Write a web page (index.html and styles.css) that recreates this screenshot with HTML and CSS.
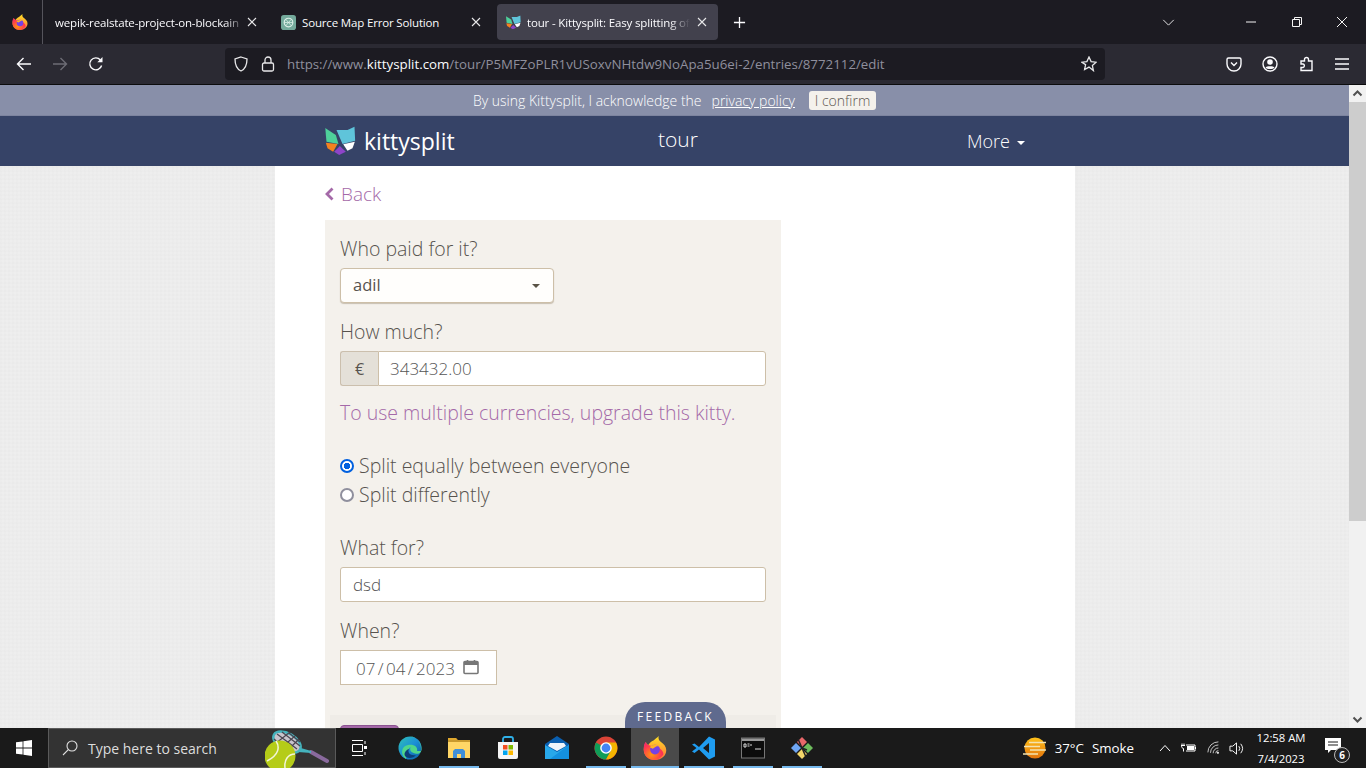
FILE: index.html
```html
<!DOCTYPE html>
<html lang="en">
<head>
<meta charset="utf-8">
<title>tour - Kittysplit</title>
<link rel="stylesheet" href="styles.css">
</head>
<body>
<header class="tabbar">
  <div class="ff-slot">
    <svg class="i16" viewBox="0 0 32 32"><use href="#firefox"/></svg>
  </div>
  <div class="tab tab-1"><span class="tab-title fade">wepik-realstate-project-on-blockain</span><svg class="tab-x" viewBox="0 0 10 10"><path d="M1 1l8 8M9 1l-8 8"/></svg></div>
  <div class="tab tab-2">
    <svg class="tab-ico" viewBox="0 0 16 16"><rect width="16" height="16" rx="3" fill="#74aa9c"/><circle cx="8" cy="8" r="4.600" fill="none" stroke="#dff0ea" stroke-width="1.200"/><path d="M5 4.500l6 7M11 4.500l-6 7M3.500 8h9" stroke="#dff0ea" stroke-width=".8"/></svg>
    <span class="tab-title">Source Map Error Solution</span><svg class="tab-x" viewBox="0 0 10 10"><path d="M1 1l8 8M9 1l-8 8"/></svg></div>
  <div class="tab tab-3">
    <svg class="tab-ico" viewBox="0 0 92 90"><use href="#kitty"/></svg>
    <span class="tab-title fade">tour - Kittysplit: Easy splitting of</span><svg class="tab-x" viewBox="0 0 10 10"><path d="M1 1l8 8M9 1l-8 8"/></svg></div>
  <svg class="plus" viewBox="0 0 14 14"><path d="M7 1v12M1 7h12"/></svg>
  <div class="win-ctrls">
    <svg class="chev" viewBox="0 0 14 8"><path d="M1 1l6 6 6-6"/></svg>
    <svg class="wc wc-min" viewBox="0 0 10 10"><path d="M0 5h10"/></svg>
    <svg class="wc wc-max" viewBox="0 0 10 10"><path d="M.5 2.500h7v7h-7zM2.500 2.500v-2h7v7h-2"/></svg>
    <svg class="wc wc-close" viewBox="0 0 10 10"><path d="M0 0l10 10M10 0L0 10"/></svg>
  </div>
</header>
<nav class="toolbar">
  <svg class="tb-ico" viewBox="0 0 16 16"><path d="M15 8H1.500M7.500 2L1.500 8l6 6"/></svg>
  <svg class="tb-ico dim" viewBox="0 0 16 16"><path d="M1 8h13.500M8.500 2l6 6-6 6"/></svg>
  <svg class="tb-ico" viewBox="0 0 16 16"><path d="M13.600 9.500A6 6 0 1 1 12.400 4"/><path class="solid" d="M14.500 1v5.200H9.300z"/></svg>
  <div class="urlbar">
    <svg class="ub-shield" viewBox="0 0 16 16"><path d="M8 1l6 2c0 6-1.500 10-6 12C3.500 13 2 9 2 3z"/></svg>
    <svg class="ub-lock" viewBox="0 0 16 16"><rect x="2.500" y="7" width="11" height="8" rx="1.500"/><path d="M5 7V4a3 3 0 0 1 6 0v3"/></svg>
    <span class="url"><span class="url-dim">https://www.</span><span class="url-host">kittysplit.com</span><span class="url-dim">/tour/P5MFZoPLR1vUSoxvNHtdw9NoApa5u6ei-2/entries/8772112/edit</span></span>
    <svg class="ub-star" viewBox="0 0 16 16"><path d="M8 1l2.100 4.600 5 .6-3.700 3.400 1 5L8 11.100l-4.400 2.500 1-5L.9 6.200l5-.6z"/></svg>
  </div>
  <div class="tb-right">
    <svg class="tb-ico" viewBox="0 0 16 16"><path d="M2.500 2h11A1.500 1.500 0 0 1 15 3.500V8A7 7 0 0 1 1 8V3.500A1.500 1.500 0 0 1 2.500 2z"/><path d="M5 6.500l3 3 3-3"/></svg>
    <svg class="tb-ico" viewBox="0 0 16 16"><circle cx="8" cy="8" r="7"/><circle class="solid" cx="8" cy="6" r="2.800"/><path class="solid" d="M3.500 11.500c1-1.700 8-1.700 9 0C11 13.500 5 13.500 3.500 11.500z"/></svg>
    <svg class="tb-ico" viewBox="0 0 16 16"><path d="M2 5h3.500V3.500a2 2 0 0 1 4 0V5H13v9.500H2v-3h2a1.800 1.800 0 0 0 0-3.500H2z" transform="translate(1 0)"/></svg>
    <svg class="tb-ico" viewBox="0 0 16 16"><path d="M1 3h14M1 8h14M1 13h14"/></svg>
  </div>
</nav>
<div class="viewport">
  <div class="page">
    <div class="consent"><span>By using Kittysplit, I acknowledge the</span><a class="consent-link">privacy policy</a><button class="confirm">I confirm</button></div>
    <div class="navbar">
      <div class="nav-inner">
        <a class="brand"><svg class="brand-ico" viewBox="0 0 92 90"><use href="#kitty"/></svg><span class="brand-name">kittysplit</span></a>
        <span class="nav-title">tour</span>
        <a class="nav-more">More<i class="caret"></i></a>
      </div>
    </div>
    <main class="sheet">
      <a class="back"><svg class="back-ico" viewBox="0 0 9 14"><path d="M7.500 1.500L2 7l5.500 5.500"/></svg>Back</a>
      <form class="panel">
        <label class="lbl lbl-first">Who paid for it?</label>
        <div class="select">adil<i class="caret caret-dark"></i></div>
        <label class="lbl">How much?</label>
        <div class="group"><span class="addon">€</span><input class="field field-joined" value="343432.00"></div>
        <p class="upgrade">To use multiple currencies, upgrade this kitty.</p>
        <label class="opt"><input class="radio" type="radio" name="split" checked>Split equally between everyone</label>
        <label class="opt"><input class="radio" type="radio" name="split">Split differently</label>
        <label class="lbl lbl-what">What for?</label>
        <input class="field" value="dsd">
        <label class="lbl">When?</label>
        <div class="date">07 / 04 / 2023<svg class="cal" viewBox="0 0 16 16"><path class="cal-band" d="M1 3.500a1 1 0 0 1 1-1h12a1 1 0 0 1 1 1V6H1z"/><path d="M1 5h14v8.500a1 1 0 0 1-1 1H2a1 1 0 0 1-1-1V3.500a1 1 0 0 1 1-1h12a1 1 0 0 1 1 1V5M4.500 1v2.500M11.500 1v2.500"/></svg></div>
        <div class="actions"><button class="save" type="button" aria-label="Save"></button></div>
      </form>
    </main>
  </div>
  <div class="scrollbar">
    <svg class="sb-arrow" viewBox="0 0 17 17"><path d="M4.500 10.500l4-4 4 4"/></svg>
    <div class="sb-track"><div class="sb-thumb"></div></div>
    <svg class="sb-arrow" viewBox="0 0 17 17"><path d="M4.500 6.500l4 4 4-4"/></svg>
  </div>
  <div class="feedback">FEEDBACK</div>
</div>
<footer class="taskbar">
  <div class="start"><svg class="win" viewBox="0 0 16 16"><path d="M0 2.300l6.600-.9v6.200H0zM7.400 1.300L16 0v7.600H7.400zM0 8.400h6.600v6.200L0 13.700zM7.400 8.400H16V16l-8.600-1.300z"/></svg></div>
  <div class="search">
    <svg class="search-ico" viewBox="0 0 16 16"><circle cx="10" cy="6" r="5"/><path d="M6.300 9.700L1 15"/></svg>
    <span class="search-text">Type here to search</span>
    <svg class="racket" viewBox="0 0 64 39">
      <path d="M46 23l16 9" stroke="#8a6a9e" stroke-width="4" stroke-linecap="round"/>
      <path d="M32 19l14 4M20 21l26 2" stroke="#45b3bd" stroke-width="2"/>
      <ellipse cx="22" cy="13" rx="15" ry="8.500" transform="rotate(30 22 13)" fill="#c9c4cc" stroke="#45b3bd" stroke-width="2.500"/>
      <path d="M12 5l20 15M17 3l18 14M24 4l11 9M9 10l15 13M10 15l15-12M16 19L30 7M23 21l11-11" stroke="#4a4550" stroke-width="1.200"/>
      <circle cx="15" cy="27" r="15.500" fill="#b5cc18"/>
      <path d="M11 12c4 6 3 14-9 20M30 25c-7 0-11 6-10 14" fill="none" stroke="#f2f5d8" stroke-width="1.500"/>
    </svg>
  </div>
  <div class="taskview"><svg class="tv" viewBox="0 0 16 16"><path d="M0 .5h11M0 15.500h11M.5 4.500h10v7H.5zM13 1v3M13 12v3"/><rect class="tv-dot" x="12" y="6" width="3" height="3"/></svg></div>
  <div class="apps">
    <div class="app"><svg class="app-ico" viewBox="0 0 24 24"><defs><linearGradient id="edge" x1="0" y1="0" x2="1" y2="1"><stop offset="0" stop-color="#2fc2b5"/><stop offset=".5" stop-color="#1b8fd6"/><stop offset="1" stop-color="#0a5c9e"/></linearGradient></defs><circle cx="12" cy="12" r="11.500" fill="url(#edge)"/><path d="M8 23C2 19 3 10 10 9c6-1 10 2 9 6h4C24 7 18 0 12 .5 20 1 24 8 23.500 14c-1 5-6 4-8 3-3-1-4-3-3-6-3 2-4 8-4.500 12z" fill="#4fd68a"/><path d="M11 13c-2 4 2 7 7 6-2 3-7 4-10 2s-1-7 3-8z" fill="#0c3e78"/></svg></div>
    <div class="app app-on"><svg class="app-ico" viewBox="0 0 24 24"><path d="M1 2h8l2 2h12v18H1z" fill="#c99a2e"/><path d="M1 6h22v16H1z" fill="#ffd666"/><path d="M1 2h8l1 2H1z" fill="#e0a82e"/><path d="M6 22v-7l2-2h8l2 2v7h-4v-4h-4v4z" fill="#3f8fd8"/></svg></div>
    <div class="app"><svg class="app-ico" viewBox="0 0 24 24"><path d="M7 6V3a2 2 0 0 1 2-2h6a2 2 0 0 1 2 2v3" fill="none" stroke="#2fb0e8" stroke-width="1.800"/><path d="M2 6h20v15a2 2 0 0 1-2 2H4a2 2 0 0 1-2-2z" fill="#f5f5f5"/><rect x="7" y="9" width="4.500" height="4.500" fill="#f25022"/><rect x="12.500" y="9" width="4.500" height="4.500" fill="#7fba00"/><rect x="7" y="14.500" width="4.500" height="4.500" fill="#00a4ef"/><rect x="12.500" y="14.500" width="4.500" height="4.500" fill="#ffb900"/></svg></div>
    <div class="app"><svg class="app-ico" viewBox="0 0 24 24"><path d="M12 0l12 8v15H0V8z" fill="#0a5fb0"/><path d="M5 7h14l2 3-9 5-9-5z" fill="#eef4fa"/><path d="M0 9l12 7 12-7v14H0z" fill="#28a8ea"/><path d="M24 9v14H5z" fill="#1490df"/></svg></div>
    <div class="app app-on"><svg class="app-ico" viewBox="0 0 24 24"><circle cx="12" cy="12" r="11.500" fill="#db4437"/><path d="M12 12L2 6.500A11.500 11.500 0 0 0 12 23.500l5-9z" fill="#0f9d58"/><path d="M12 6.500h10A11.500 11.500 0 0 1 12 23.500l5-9z" fill="#f4b400"/><circle cx="12" cy="12" r="5.800" fill="#fff"/><circle cx="12" cy="12" r="4.400" fill="#4285f4"/></svg></div>
    <div class="app app-active"><svg class="app-ico" viewBox="0 0 32 32"><use href="#firefox"/></svg></div>
    <div class="app app-on"><svg class="app-ico" viewBox="0 0 24 24"><path d="M17 .5l6 3v17l-6 3-10-10-4.500 3.500L0 15.500 4.500 12 0 8.500 2.500 7.500 7 11zM17 7l-6 5 6 5z" fill="#1f9cf0"/></svg></div>
    <div class="app app-on"><svg class="app-ico" viewBox="0 0 24 24"><rect x=".5" y="2" width="23" height="20" fill="#0c0c0c" stroke="#777"/><rect x="1" y="2.500" width="22" height="2.500" fill="#999"/><path d="M3 8h2v3H3zM6.500 8h2M6.500 10h2M10 8v2M14 13h6" stroke="#ddd" fill="none"/></svg></div>
    <div class="app app-on"><svg class="app-ico" viewBox="0 0 24 24"><path d="M12 1l5 5-5 5-5-5z" fill="#e8676a"/><path d="M6 7l5 5-5 5-5-5z" fill="#6ea6f5"/><path d="M18 7l5 5-5 5-5-5z" fill="#6dbb5c"/><path d="M12 13l5 5-5 5-5-5z" fill="#f4d76b"/><path d="M8 3l8 18M12 12l5 2" stroke="#222" stroke-width="1.500" fill="none"/></svg></div>
  </div>
  <div class="tray">
    <svg class="sun" viewBox="0 0 24 24"><defs><linearGradient id="sun" x1="0" y1="0" x2="0" y2="1"><stop offset="0" stop-color="#ffc21a"/><stop offset="1" stop-color="#e2730c"/></linearGradient></defs><circle cx="12" cy="12" r="10.500" fill="url(#sun)"/><path d="M6 6.500h17M1 10.500h16M7 14h16M0 18h15" stroke="#f4e3b0" stroke-width="1.600"/></svg>
    <span class="temp">37°C</span><span class="weather">Smoke</span>
    <svg class="tray-ico tray-up" viewBox="0 0 12 8"><path d="M1 7l5-5.500L11 7"/></svg>
    <svg class="tray-ico tray-bat" viewBox="0 0 16 12"><path d="M5 3h9v6H5M14.500 5v2M0 3.500h4M1 1.500v2M3 1.500v2M.5 3.500c0 2 1 3 2 3v3"/><rect class="tray-fill" x="6" y="4" width="7" height="4"/></svg>
    <svg class="tray-ico tray-wifi" viewBox="0 0 16 16"><path d="M1 13A12 12 0 0 1 13 1M4 13.500A9 9 0 0 1 13 4.500M7 14a6 6 0 0 1 6-6M10 14a3 3 0 0 1 3-3"/><circle class="tray-fill" cx="12.500" cy="13.500" r="1.300"/></svg>
    <svg class="tray-ico tray-vol" viewBox="0 0 16 16"><path d="M1 5.500h3L8 2v12l-4-3.500H1zM10.500 5.500a4 4 0 0 1 0 5M12.500 3a8 8 0 0 1 0 10"/></svg>
    <div class="clock"><span>12:58 AM</span><span>7/4/2023</span></div>
    <div class="notif">
      <svg class="notif-ico" viewBox="0 0 16 16"><path class="tray-solid" d="M0 0h16v12H6l-3 3v-3H0z"/><path d="M3 4h10M3 7h10" stroke="#1a1a1a" fill="none"/></svg>
      <span class="badge">6</span>
    </div>
  </div>
</footer>
<svg class="defs" width="0" height="0">
  <defs>
    <radialGradient id="ffg" cx=".4" cy=".7" r=".9"><stop offset="0" stop-color="#ff980e"/><stop offset=".55" stop-color="#ff3750"/><stop offset="1" stop-color="#e31587"/></radialGradient>
    <linearGradient id="ffy" x1="0" y1="0" x2="0" y2="1"><stop offset="0" stop-color="#ffe226"/><stop offset="1" stop-color="#ff7139"/></linearGradient>
    <symbol id="firefox" viewBox="0 0 32 32">
      <path d="M21 0c-1 3 0 6 3 8 4 3 7 6 7 11 0 7-6 13-15 13C7 32 1 26 1 18c0-4 1-7 3-10 0 2 1 3 3 4 2-3 4-5 7-6 2-2 5-4 7-6z" fill="url(#ffy)"/>
      <path d="M1 18C1 12 2 9 4 8c0 2 1 3 3 4l3 1 10 2c5 3 8 7 7 10-3 4-7 7-12 7C7 32 1 26 1 18z" fill="url(#ffg)"/>
      <circle cx="16" cy="18" r="6.500" fill="#7542e5"/>
      <path d="M9 15c2-3 9-5 13-1-3-1-5 0-6 1l-3 2z" fill="#ffb326"/>
    </symbol>
    <symbol id="kitty" viewBox="18 18 92 90">
      <path d="M18 24L50 45l8 27-36-7z" fill="#4ed19b"/>
      <path d="M52 30h33l21-10 2 42-38 10z" fill="#5fc4da"/>
      <path d="M20 68l35 4-13 23-17-10z" fill="#f58220"/>
      <path d="M62 78l18 17-20 10-15-10z" fill="#8e44c8"/>
      <path d="M72 73l35-8-7 20-15 7z" fill="#ffffff"/>
    </symbol>
  </defs>
</svg>
</body>
</html>
```
FILE: styles.css
```css
* { box-sizing: border-box; }
html, body { margin: 0; height: 100%; overflow: hidden; }
body { display: flex; flex-direction: column; width: 1366px; height: 768px; font-family: "Open Sans", sans-serif; background: #1c1b22; }
svg { display: block; flex: none; }
.defs { position: absolute; }

.tabbar { height: 44px; background: #1c1b22; display: flex; align-items: center; color: #fbfbfe; font-size: 11.500px; letter-spacing: -.16px; flex: none; }
.ff-slot { width: 43px; height: 44px; border-right: 1px solid #55545c; display: flex; align-items: center; padding-left: 12px; }
.i16 { width: 16px; height: 16px; }
.tab { height: 36px; display: flex; align-items: center; position: relative; border-radius: 4px; }
.tab-1 { width: 226px; padding-left: 12px; margin-right: 12px; }
.tab-2 { width: 216px; padding-left: 0; }
.tab-3 { width: 221px; padding-left: 9px; background: #42414d; margin-right: 15px; }
.tab-ico { width: 15px; height: 15px; margin-right: 6px; }
.tab-title { white-space: nowrap; overflow: hidden; flex: 1; }
.fade { -webkit-mask-image: linear-gradient(to left, transparent 0, #000 20px); mask-image: linear-gradient(to left, transparent 0, #000 20px); }
.tab-x { width: 10px; height: 10px; fill: none; stroke: #e8e8ea; stroke-width: 1.100; flex: none; }
.tab-1 .tab-x { margin: 0 0 0 2px; }
.tab-1 .tab-title { flex: none; width: 190px; }
.tab-2 .tab-x { margin-right: 16px; }
.tab-3 .tab-x { margin: 0 11px 0 7px; }
.plus { width: 13px; height: 13px; fill: none; stroke: #fbfbfe; stroke-width: 1.400; }
.win-ctrls { margin-left: auto; display: flex; align-items: center; height: 44px; }
.chev { width: 13px; height: 7px; fill: none; stroke: #e8e8ea; stroke-width: 1.100; margin-right: 71px; }
.wc { width: 10px; height: 10px; fill: none; stroke: #f5f5f5; stroke-width: 1; }
.wc-min { margin-right: 36px; }
.wc-max { margin-right: 35px; }
.wc-close { margin-right: 19px; }

.toolbar { height: 41px; background: #2b2a33; border-bottom: 1px solid #0c0c0d; display: flex; align-items: center; flex: none; padding-left: 16px; }
.tb-ico { width: 16px; height: 16px; fill: none; stroke: #fbfbfe; stroke-width: 1.400; margin-right: 20px; }
.tb-ico .solid, .solid { fill: #fbfbfe; stroke: none; }
.dim { stroke: #6d6c75; }
.urlbar { flex: none; width: 880px; height: 32px; margin-left: 101px; background: #1c1b22; border-radius: 4px; display: flex; align-items: center; padding-left: 8px; color: #8f8f9d; font-size: 13.300px; }
.ub-shield, .ub-lock, .ub-star { fill: none; stroke: #e8e8ea; stroke-width: 1.300; width: 16px; height: 16px; }
.ub-shield { margin-right: 11px; }
.ub-lock { margin-right: 11px; }
.url { white-space: nowrap; flex: 1; }
.url-host { color: #fbfbfe; }
.ub-star { margin-right: 8px; }
.tb-right { display: flex; margin-left: 121px; }

.viewport { flex: 1; display: flex; position: relative; min-height: 0; }
.page { flex: 1; overflow: hidden; min-width: 0; background-color: #eeeeee; background-image: repeating-linear-gradient(0deg, rgba(0,0,0,.008) 0 2px, transparent 2px 4px), repeating-linear-gradient(90deg, rgba(0,0,0,.008) 0 2px, transparent 2px 4px); }
.consent { height: 31px; background: #888fa9; border-bottom: 1px solid #7d849f; color: #fff; font-size: 14px; font-weight: 300; display: flex; align-items: center; justify-content: center; }
.consent-link { margin: 0 14px 0 10px; text-decoration: underline; }
.confirm { height: 19px; width: 67px; padding: 0; border: 0; border-radius: 3px; background: #f4f1ec; color: #5c5750; font: 300 14px "Open Sans", sans-serif; }
.navbar { height: 50px; background: #364367; color: #fff; }
.nav-inner { width: 800px; margin-left: 275px; padding-left: 50px; display: grid; grid-template-columns: 230px 246px 1fr; height: 50px; align-items: center; }
.brand { display: flex; align-items: center; height: 50px; }
.brand-ico { width: 31px; height: 30px; margin-right: 8px; }
.brand-name { font-size: 23px; font-weight: 400; }
.nav-title { text-align: center; font-size: 21px; font-weight: 300; position: relative; top: -2px; }
.nav-more { font-size: 18px; font-weight: 300; white-space: nowrap; padding-left: 166px; }
.caret { display: inline-block; width: 0; height: 0; border: 4px solid transparent; border-top-color: #fff; border-bottom: 0; margin-left: 7px; vertical-align: 3px; }

.sheet { width: 800px; margin-left: 275px; background: #fff; padding: 16px 50px 0; height: 600px; }
.back { display: flex; align-items: center; height: 24px; color: #a469a8; font-size: 19px; font-weight: 300; }
.back-ico { width: 9px; height: 14px; fill: none; stroke: #a469a8; stroke-width: 2.800; margin-right: 7px; }
.panel { width: 456px; margin-top: 14px; background: #f4f1ec; padding: 14px 15px 0; color: #57534e; display: flex; flex-direction: column; align-items: flex-start; height: 560px; }
.lbl { font-size: 19.500px; font-weight: 300; line-height: 30px; height: 30px; margin-top: 14px; }
.lbl-first { margin-top: 0; }
.lbl-what { margin-top: 24px; }
.select { width: 214px; height: 35px; background: #fffefc; border: 1px solid #cdbfa8; border-radius: 4px; box-shadow: 0 1px 1px rgba(120,100,70,.35); margin-top: 4px; display: flex; align-items: center; justify-content: space-between; padding: 0 13px 2px 12px; font-size: 16.500px; font-weight: 400; color: #57534e; }
.caret-dark { border-top-color: #5a5346; margin: 2px 0 0; vertical-align: middle; }
.group { width: 426px; height: 35px; display: flex; margin-top: 4px; }
.addon { width: 38px; height: 35px; background: #e4e0d8; border: 1px solid #cbbfad; border-right: 0; border-radius: 3px 0 0 3px; display: flex; align-items: center; justify-content: center; font-size: 16px; color: #57534e; }
.field { width: 426px; height: 35px; background: #fff; border: 1px solid #cdbfa8; border-radius: 3px; padding: 0 12px; font: 300 17px "Open Sans", sans-serif; color: #555; margin-top: 4px; outline: 0; }
.field-joined { flex: 1; width: auto; margin-top: 0; border-radius: 0 3px 3px 0; padding-left: 11px; }
.upgrade { margin: 12px 0 23px; font-size: 19.500px; font-weight: 300; line-height: 30px; height: 30px; color: #a469a8; }
.opt { display: flex; align-items: center; font-size: 19.500px; font-weight: 300; line-height: 29px; height: 29px; }
.radio { appearance: none; -webkit-appearance: none; width: 14px; height: 14px; margin: 0 5px 0 0; border-radius: 50%; border: 2px solid #8f8f9d; background: #fff; }
.radio:checked { border: 2px solid #0060df; background: radial-gradient(circle, #0060df 0 3px, #fff 3.500px); }
.date { width: 157px; height: 35px; background: #fff; border: 1px solid #cdbfa8; margin-top: 4px; display: flex; align-items: center; padding: 1px 0 0 15px; font-size: 17px; font-weight: 300; word-spacing: -2px; color: #555; }
.cal { width: 16px; height: 16px; fill: none; stroke: #777; stroke-width: 1.600; margin: -3px 0 0 8px; }
.cal-band { fill: #777; stroke: none; }
.actions { width: 446px; margin: 30px 0 0 -10px; height: 60px; background: #efece7; padding: 10px 0 0 10px; }
.save { display: block; width: 59px; height: 34px; background: #a469a8; border: 1px solid #8b5290; border-radius: 4px; }

.scrollbar { width: 17px; background: #f1f1f1; display: flex; flex-direction: column; }
.sb-arrow { width: 17px; height: 17px; fill: none; stroke: #505050; stroke-width: 2; background: #f1f1f1; }
.sb-track { flex: 1; }
.sb-thumb { height: 419px; background: #cdcdcd; }
.feedback { position: absolute; left: 625px; bottom: 0; width: 101px; height: 26px; background: #5f6a8e; border-radius: 20px 20px 0 0; color: #fff; font-size: 12px; letter-spacing: 2.300px; text-align: center; line-height: 29px; font-weight: 400; }

.taskbar { height: 40px; background: #1a1a1a; display: flex; align-items: center; color: #fff; flex: none; }
.start { width: 48px; height: 40px; display: flex; align-items: center; justify-content: center; }
.win { width: 16px; height: 16px; fill: #fff; }
.search { width: 288px; height: 40px; background: #333; border: 1px solid #5a5a5a; display: flex; align-items: center; padding-left: 13px; position: relative; }
.search-ico { width: 16px; height: 16px; fill: none; stroke: #e0e0e0; stroke-width: 1.100; margin-right: 10px; }
.search-text { font-size: 14px; color: #ddd; }
.racket { position: absolute; left: 216px; top: 0; width: 64px; height: 39px; }
.taskview { width: 48px; height: 40px; display: flex; align-items: center; justify-content: center; }
.tv { width: 16px; height: 16px; fill: none; stroke: #fff; stroke-width: 1; }
.tv-dot { fill: #fff; stroke: none; }
.apps { display: flex; height: 40px; margin-left: 1px; }
.app { width: 49px; height: 40px; display: flex; align-items: center; justify-content: center; }
.app-on { background: linear-gradient(#76b9ed, #76b9ed) center bottom / 40px 2px no-repeat; }
.app-active { width: 48px; margin-left: 1px; background: #4a4a4a linear-gradient(#76b9ed, #76b9ed) center bottom / 100% 2px no-repeat; }
.app-ico { width: 24px; height: 24px; }
.tray { margin-left: auto; display: flex; align-items: center; height: 40px; font-size: 13.300px; }
.sun { width: 24px; height: 24px; margin-right: 8px; }
.temp { margin-right: 8px; }
.weather { margin-right: 25px; }
.tray-ico { fill: none; stroke: #fff; stroke-width: 1; }
.tray-fill { fill: #fff; stroke: none; }
.tray-solid { fill: #fff; }
.tray-up { width: 12px; height: 8px; margin-right: 10px; }
.tray-bat { width: 16px; height: 12px; margin-right: 10px; }
.tray-wifi { width: 14px; height: 14px; opacity: .85; margin-right: 8px; }
.tray-vol { width: 15px; height: 15px; margin-right: 8px; }
.clock { width: 58px; display: flex; flex-direction: column; align-items: center; font-size: 11.300px; line-height: 21px; margin-right: 8px; }
.notif { width: 34px; height: 40px; position: relative; display: flex; align-items: center; padding-left: 7px; margin-right: 14px; }
.notif-ico { width: 16px; height: 16px; margin-top: -4px; }
.badge { position: absolute; left: 16px; top: 19px; width: 16px; height: 16px; border-radius: 50%; border: 1px solid #bbb; background: #222; font-size: 10px; font-weight: 700; line-height: 14px; text-align: center; }
```
